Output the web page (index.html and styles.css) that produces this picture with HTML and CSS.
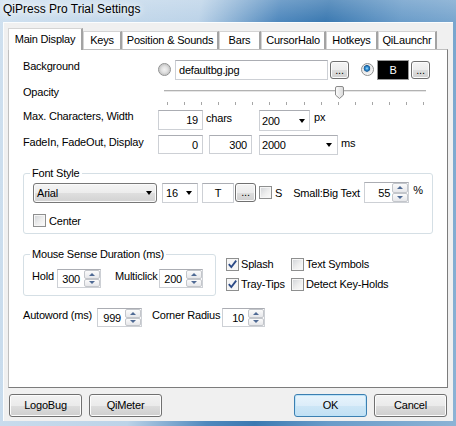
FILE: index.html
```html
<!DOCTYPE html>
<html lang="en">
<head>
    <meta charset="UTF-8">
    <title>QiPress Pro Trial Settings</title>
    <link rel="stylesheet" href="styles.css">
</head>
<body>
    <div class="titlebar">QiPress Pro Trial Settings</div>
    <div class="client">
        <div class="tabs">
            <div class="tab active tab-main">Main Display</div>
            <div class="tab tab-keys">Keys</div>
            <div class="tab tab-pos">Position &amp; Sounds</div>
            <div class="tab tab-bars">Bars</div>
            <div class="tab tab-halo">CursorHalo</div>
            <div class="tab tab-hot">Hotkeys</div>
            <div class="tab tab-launch">QiLaunchr</div>
        </div>

        <div class="panel">
            <!-- background image or colour -->
            <div class="row row-bg">
                <div class="label">Background</div>
                <span class="radio"></span>
                <div class="edit edit-file">defaultbg.jpg</div>
                <div class="dots">...</div>
                <span class="radio on radio-color"></span>
                <div class="swatch">B</div>
                <div class="dots">...</div>
            </div>

            <div class="row row-opacity">
                <div class="label">Opacity</div>
                <div class="slider">
                    <div class="track"></div>
                    <svg class="thumb" width="9" height="13" viewBox="0 0 9 13">
                        <defs>
                            <linearGradient id="tg" x1="0" y1="0" x2="1" y2="0">
                                <stop offset="0" stop-color="#fdfdfd"/>
                                <stop offset="1" stop-color="#d9d9d9"/>
                            </linearGradient>
                        </defs>
                        <path d="M0.5 2 Q0.5 0.5 2 0.5 H7 Q8.5 0.5 8.5 2 V9 L4.5 12.5 L0.5 9 Z" fill="url(#tg)" stroke="#8b8b8b"/>
                    </svg>
                    <div class="ticks">
                        <i></i><i></i><i></i><i></i><i></i><i></i><i></i><i></i>
                        <i></i><i></i><i></i><i></i><i></i><i></i><i></i><i></i>
                    </div>
                </div>
            </div>

            <div class="row row-chars">
                <div class="label">Max. Characters, Width</div>
                <div class="edit num edit-chars">19</div>
                <div class="unit-chars">chars</div>
                <div class="combo combo-width">200</div>
                <div class="unit">px</div>
            </div>

            <div class="row row-fade">
                <div class="label">FadeIn, FadeOut, Display</div>
                <div class="edit num edit-fade1">0</div>
                <div class="edit num edit-fade2">300</div>
                <div class="combo combo-display">2000</div>
                <div class="unit unit-ms">ms</div>
            </div>

            <fieldset class="group-font">
                <legend>Font Style</legend>
                <div class="row font-row">
                    <div class="combo combo-font">Arial</div>
                    <div class="combo combo-size">16</div>
                    <div class="edit tbox">T</div>
                    <div class="dots">...</div>
                    <span class="check"></span>
                    <span class="s-label">S</span>
                    <span class="big-label">Small:Big Text</span>
                    <div class="spin spin-big"><span class="val">55</span><span class="arrows"><i class="up"></i><i class="down"></i></span></div>
                    <span class="pct">%</span>
                </div>
                <div class="row center-row">
                    <span class="check"></span>
                    <span class="check-text">Center</span>
                </div>
            </fieldset>

            <div class="row-mouse">
                <fieldset class="group-mouse">
                    <legend>Mouse Sense Duration (ms)</legend>
                    <div class="row mouse-row">
                        <span class="hold">Hold</span>
                        <div class="spin spin-hold"><span class="val">300</span><span class="arrows"><i class="up"></i><i class="down"></i></span></div>
                        <span class="multi">Multiclick</span>
                        <div class="spin spin-multi"><span class="val">200</span><span class="arrows"><i class="up"></i><i class="down"></i></span></div>
                    </div>
                </fieldset>
                <div class="checks">
                    <div class="opt"><span class="check on"><svg width="11" height="11" viewBox="0 0 11 11"><path d="M1.8 5.2 L4.3 8 L9.2 1.6" fill="none" stroke="#2b4a86" stroke-width="1.8"/></svg></span><span class="check-text">Splash</span></div>
                    <div class="opt"><span class="check"></span><span class="check-text">Text Symbols</span></div>
                    <div class="opt"><span class="check on"><svg width="11" height="11" viewBox="0 0 11 11"><path d="M1.8 5.2 L4.3 8 L9.2 1.6" fill="none" stroke="#2b4a86" stroke-width="1.8"/></svg></span><span class="check-text">Tray-Tips</span></div>
                    <div class="opt"><span class="check"></span><span class="check-text">Detect Key-Holds</span></div>
                </div>
            </div>

            <div class="row row-auto">
                <span class="auto-label">Autoword (ms)</span>
                <div class="spin spin-auto"><span class="val">999</span><span class="arrows"><i class="up"></i><i class="down"></i></span></div>
                <span class="radius-label">Corner Radius</span>
                <div class="spin spin-radius"><span class="val">10</span><span class="arrows"><i class="up"></i><i class="down"></i></span></div>
            </div>
        </div>

        <div class="buttons">
            <div class="btn">LogoBug</div>
            <div class="btn btn-meter">QiMeter</div>
            <div class="btn default btn-ok">OK</div>
            <div class="btn btn-cancel">Cancel</div>
        </div>
    </div>
</body>
</html>
```

FILE: styles.css
```css
body {
    margin: 0;
    width: 456px;
    height: 426px;
    overflow: hidden;
    font-family: "Liberation Sans", Arial, sans-serif;
    font-size: 11px;
    letter-spacing: -0.2px;
    white-space: nowrap;
    color: #000;
    background:
        linear-gradient(180deg, rgba(255, 255, 255, 0.2), rgba(255, 255, 255, 0) 22px),
        linear-gradient(100deg, #cfe0ef 0%, #bcd3e8 38%, #4f88bd 53%, #3b79b1 62%, #6a9cc9 76%, #8cb3d5 100%);
}

/* window title */
.titlebar {
    height: 22px;
    box-sizing: border-box;
    padding: 2px 0 0 3px;
    font-size: 12px;
    line-height: 14px;
    letter-spacing: 0;
    text-shadow: 0 0 6px #fff, 0 0 10px #fff;
}

.client {
    width: 450px;
    height: 399px;
    margin-left: 3px;
    box-sizing: border-box;
    padding: 5px 0 0 4px;
    background-color: #f0f0f0;
    border-top: 1px solid #fbfdfe;
    border-left: 1px solid #fbfdfe;
}

/* tabs */
.tabs {
    display: flex;
    align-items: flex-end;
    height: 21px;
}
.tab {
    flex: none;
    height: 18px;
    box-sizing: border-box;
    background-color: #fff;
    border: 1px solid #d4d4d4;
    border-bottom: none;
    border-right: 2px solid #a3a3a3;
    text-align: center;
    line-height: 17px;
}
.tab.active {
    height: 22px;
    margin-bottom: -1px;
    position: relative;
    z-index: 1;
    line-height: 20px;
}
.tab-main { width: 75px; }
.tab-keys { width: 39px; }
.tab-pos { width: 97px; }
.tab-bars { width: 42px; }
.tab-halo { width: 65px; }
.tab-hot { width: 52px; }
.tab-launch { width: 59px; }

.panel {
    width: 440px;
    height: 339px;
    box-sizing: border-box;
    padding-left: 14px;
    background-color: #fff;
    border: 1px solid #bfbfbf;
    border-right-color: #7c7c7c;
    border-bottom-color: #7c7c7c;
}

.row {
    display: flex;
    align-items: center;
}
.label {
    flex: none;
    width: 135px;
    line-height: 13px;
}

/* generic controls */
.edit {
    flex: none;
    box-sizing: border-box;
    height: 20px;
    padding: 0 3px;
    line-height: 18px;
    background-color: #fff;
    border: 1px solid #cdd0d5;
    border-top-color: #abadb3;
    overflow: hidden;
}
.edit.num {
    text-align: right;
    padding-right: 4px;
}
.combo {
    flex: none;
    box-sizing: border-box;
    display: flex;
    align-items: center;
    justify-content: space-between;
    padding: 0 4px 0 2px;
    background-color: #fff;
    border: 1px solid #cdd0d5;
    border-top-color: #abadb3;
}
.combo::after {
    content: "";
    border-left: 3.5px solid transparent;
    border-right: 3.5px solid transparent;
    border-top: 4px solid #000;
}
.dots {
    flex: none;
    box-sizing: border-box;
    width: 19px;
    height: 18px;
    padding-top: 2px;
    text-align: center;
    line-height: 13px;
    border: 1px solid #707070;
    border-radius: 3px;
    background: linear-gradient(#f4f4f4 0%, #ececec 50%, #dedede 51%, #d0d0d0 100%);
    box-shadow: inset 0 0 0 1px #fcfcfc;
}
.radio {
    flex: none;
    width: 13px;
    height: 13px;
    box-sizing: border-box;
    border: 1px solid #8e8f8f;
    border-radius: 50%;
    background: radial-gradient(circle at 50% 50%, #f2f2f2 0, #e2e2e2 3px, #cbcbcb 5px, #eaeaea 6px);
}
.radio.on {
    background: radial-gradient(circle at 45% 40%, #a9e2ff 0, #3191d6 1.5px, #185a96 3px, #e4e4e4 3.6px, #f4f4f4 6px);
}
.check {
    flex: none;
    width: 13px;
    height: 13px;
    box-sizing: border-box;
    border: 1px solid #8e8f8f;
    background: linear-gradient(135deg, #cfd2d6 0%, #eeeeee 55%, #fbfbfb 100%);
    box-shadow: inset 0 0 0 1px #f6f6f6;
}
.check.on {
    background: #f4f4f4;
}
.check svg {
    display: block;
}
.check-text {
    margin-left: 3px;
}

.spin {
    flex: none;
    display: flex;
    box-sizing: border-box;
    height: 19px;
    background-color: #fff;
    border: 1px solid #cdd0d5;
    border-top-color: #abadb3;
}
.spin .val {
    flex: 1;
    align-self: center;
    text-align: right;
    padding-right: 4px;
}
.spin .arrows {
    width: 16px;
    display: flex;
    flex-direction: column;
}
.spin .arrows i {
    flex: 1;
    display: flex;
    align-items: center;
    justify-content: center;
    border: 1px solid #c3c6cb;
    border-radius: 2px;
    background: linear-gradient(#fbfbfb, #e6e7ea);
}
.spin .arrows .up::after {
    content: "";
    border-left: 3px solid transparent;
    border-right: 3px solid transparent;
    border-bottom: 3px solid #4f6a94;
}
.spin .arrows .down::after {
    content: "";
    border-left: 3px solid transparent;
    border-right: 3px solid transparent;
    border-top: 3px solid #4f6a94;
}

/* background row */
.row-bg {
    margin-top: 9px;
    height: 21px;
}
.row-bg .label {
    align-self: flex-start;
    padding-top: 1px;
}
.edit-file {
    width: 153px;
    margin-left: 4px;
}
.row-bg .dots {
    margin-left: 2px;
}
.radio-color {
    margin-left: 12px;
}
.swatch {
    flex: none;
    width: 32px;
    height: 20px;
    margin-left: 3px;
    box-sizing: border-box;
    background-color: #000;
    color: #fff;
    border: 1px solid #9a9a9a;
    text-align: center;
    line-height: 18px;
}

/* opacity slider */
.row-opacity {
    margin-top: 3px;
    height: 26px;
    align-items: flex-start;
}
.row-opacity .label {
    padding-top: 3px;
}
.slider {
    position: relative;
    width: 262px;
    height: 22px;
    margin: 3px 0 0 6px;
}
.track {
    margin-top: 4px;
    height: 2px;
    box-sizing: border-box;
    border-top: 1px solid #b2b2b2;
    background-color: #e6e6e6;
}
.thumb {
    position: absolute;
    left: 171px;
    top: 0;
}
.ticks {
    display: flex;
    justify-content: space-between;
    margin: 10px 2px 0 3px;
}
.ticks i {
    width: 1px;
    height: 3px;
    background-color: #a6a6a6;
}

/* characters / width */
.row-chars {
    margin-top: 1px;
    height: 21px;
    align-items: flex-start;
}
.edit-chars {
    width: 45px;
}
.unit-chars {
    flex: none;
    width: 53px;
    margin-left: 3px;
    padding-top: 2px;
    line-height: 13px;
}
.combo-width {
    width: 51px;
    height: 21px;
}
.unit {
    margin-left: 4px;
    padding-top: 1px;
    line-height: 13px;
}

/* fade times */
.row-fade {
    margin-top: 4px;
    height: 20px;
    align-items: flex-start;
}
.row-fade .label {
    padding-top: 1px;
}
.edit-fade1 {
    width: 45px;
    height: 19px;
}
.edit-fade2 {
    width: 43px;
    height: 19px;
    margin-left: 6px;
}
.combo-display {
    width: 79px;
    height: 20px;
    margin-left: 7px;
    padding-right: 5px;
}
.unit-ms {
    margin-left: 3px;
    padding-top: 2px;
}

/* group boxes */
fieldset {
    margin: 0;
    min-width: 0;
    box-sizing: border-box;
    border: 1px solid #d5dfe5;
    border-radius: 3px;
}
legend {
    padding: 0 2px;
    line-height: 13px;
}
.group-font {
    width: 410px;
    margin-top: 12px;
    padding: 2px 0 5px 9px;
}
.group-font legend {
    margin-left: -3px;
}
.font-row {
    height: 21px;
}
.combo-font {
    width: 124px;
    height: 20px;
    padding-left: 3px;
    border: 1px solid #777;
    border-radius: 3px;
    background: linear-gradient(#f4f4f4 0%, #ececec 50%, #dedede 51%, #d2d2d2 100%);
    box-shadow: inset 0 0 0 1px #fafafa;
}
.combo-size {
    width: 36px;
    height: 20px;
    margin-left: 5px;
    padding-left: 3px;
    padding-right: 5px;
}
.tbox {
    width: 32px;
    margin-left: 4px;
    text-align: center;
}
.font-row .dots {
    width: 21px;
    height: 19px;
    margin-left: 1px;
}
.font-row .check {
    margin-left: 3px;
}
.s-label {
    margin-left: 3px;
}
.big-label {
    flex: none;
    width: 71px;
    margin-left: 11px;
}
.spin-big {
    width: 45px;
    height: 21px;
}
.spin-big .val {
    padding-right: 2px;
}
.pct {
    align-self: flex-start;
    margin-left: 4px;
    padding-top: 2px;
    line-height: 13px;
}
.center-row {
    margin-top: 10px;
    height: 15px;
}

/* mouse sense */
.row-mouse {
    display: flex;
    align-items: flex-start;
    margin-top: 14px;
}
.group-mouse {
    flex: none;
    width: 193px;
    padding: 8px 0 7px 8px;
}
.group-mouse legend {
    margin-left: -2px;
}
.mouse-row {
    height: 19px;
    align-items: flex-start;
}
.hold {
    flex: none;
    width: 25px;
    padding-top: 1px;
    line-height: 13px;
}
.multi {
    flex: none;
    width: 44px;
    margin-left: 14px;
    padding-top: 1px;
    line-height: 13px;
}
.spin-hold,
.spin-multi {
    width: 44px;
}
.checks {
    display: grid;
    grid-template-columns: 65px auto;
    row-gap: 4px;
    margin: 8px 0 0 10px;
}
.opt {
    display: flex;
    align-items: center;
    height: 16px;
}
.opt .check-text {
    margin-left: 2px;
}

/* autoword */
.row-auto {
    margin-top: 12px;
    height: 19px;
    align-items: flex-start;
}
.auto-label {
    flex: none;
    width: 74px;
    padding-top: 1px;
    line-height: 13px;
}
.spin-auto {
    width: 45px;
}
.radius-label {
    flex: none;
    width: 70px;
    margin-left: 10px;
    padding-top: 1px;
    line-height: 13px;
}
.spin-radius {
    width: 43px;
}

/* dialog buttons */
.buttons {
    display: flex;
    width: 438px;
    margin: 6px 0 0 1px;
}
.btn {
    flex: none;
    width: 73px;
    height: 23px;
    box-sizing: border-box;
    border: 1px solid #707070;
    border-radius: 3px;
    background: linear-gradient(#f2f2f2 0%, #ebebeb 50%, #dddddd 51%, #cfcfcf 100%);
    box-shadow: inset 0 0 0 1px #fcfcfc;
    text-align: center;
    line-height: 21px;
}
.btn-meter {
    margin-left: 7px;
}
.btn-ok {
    margin-left: auto;
}
.btn-cancel {
    margin-left: 7px;
}
.btn.default {
    border-color: #3c7fb1;
    background: linear-gradient(#e8f4fc 0%, #dcedf9 50%, #cde6f6 51%, #c1e0f4 100%);
    box-shadow: inset 0 0 0 1px #bde3f8;
}
```
